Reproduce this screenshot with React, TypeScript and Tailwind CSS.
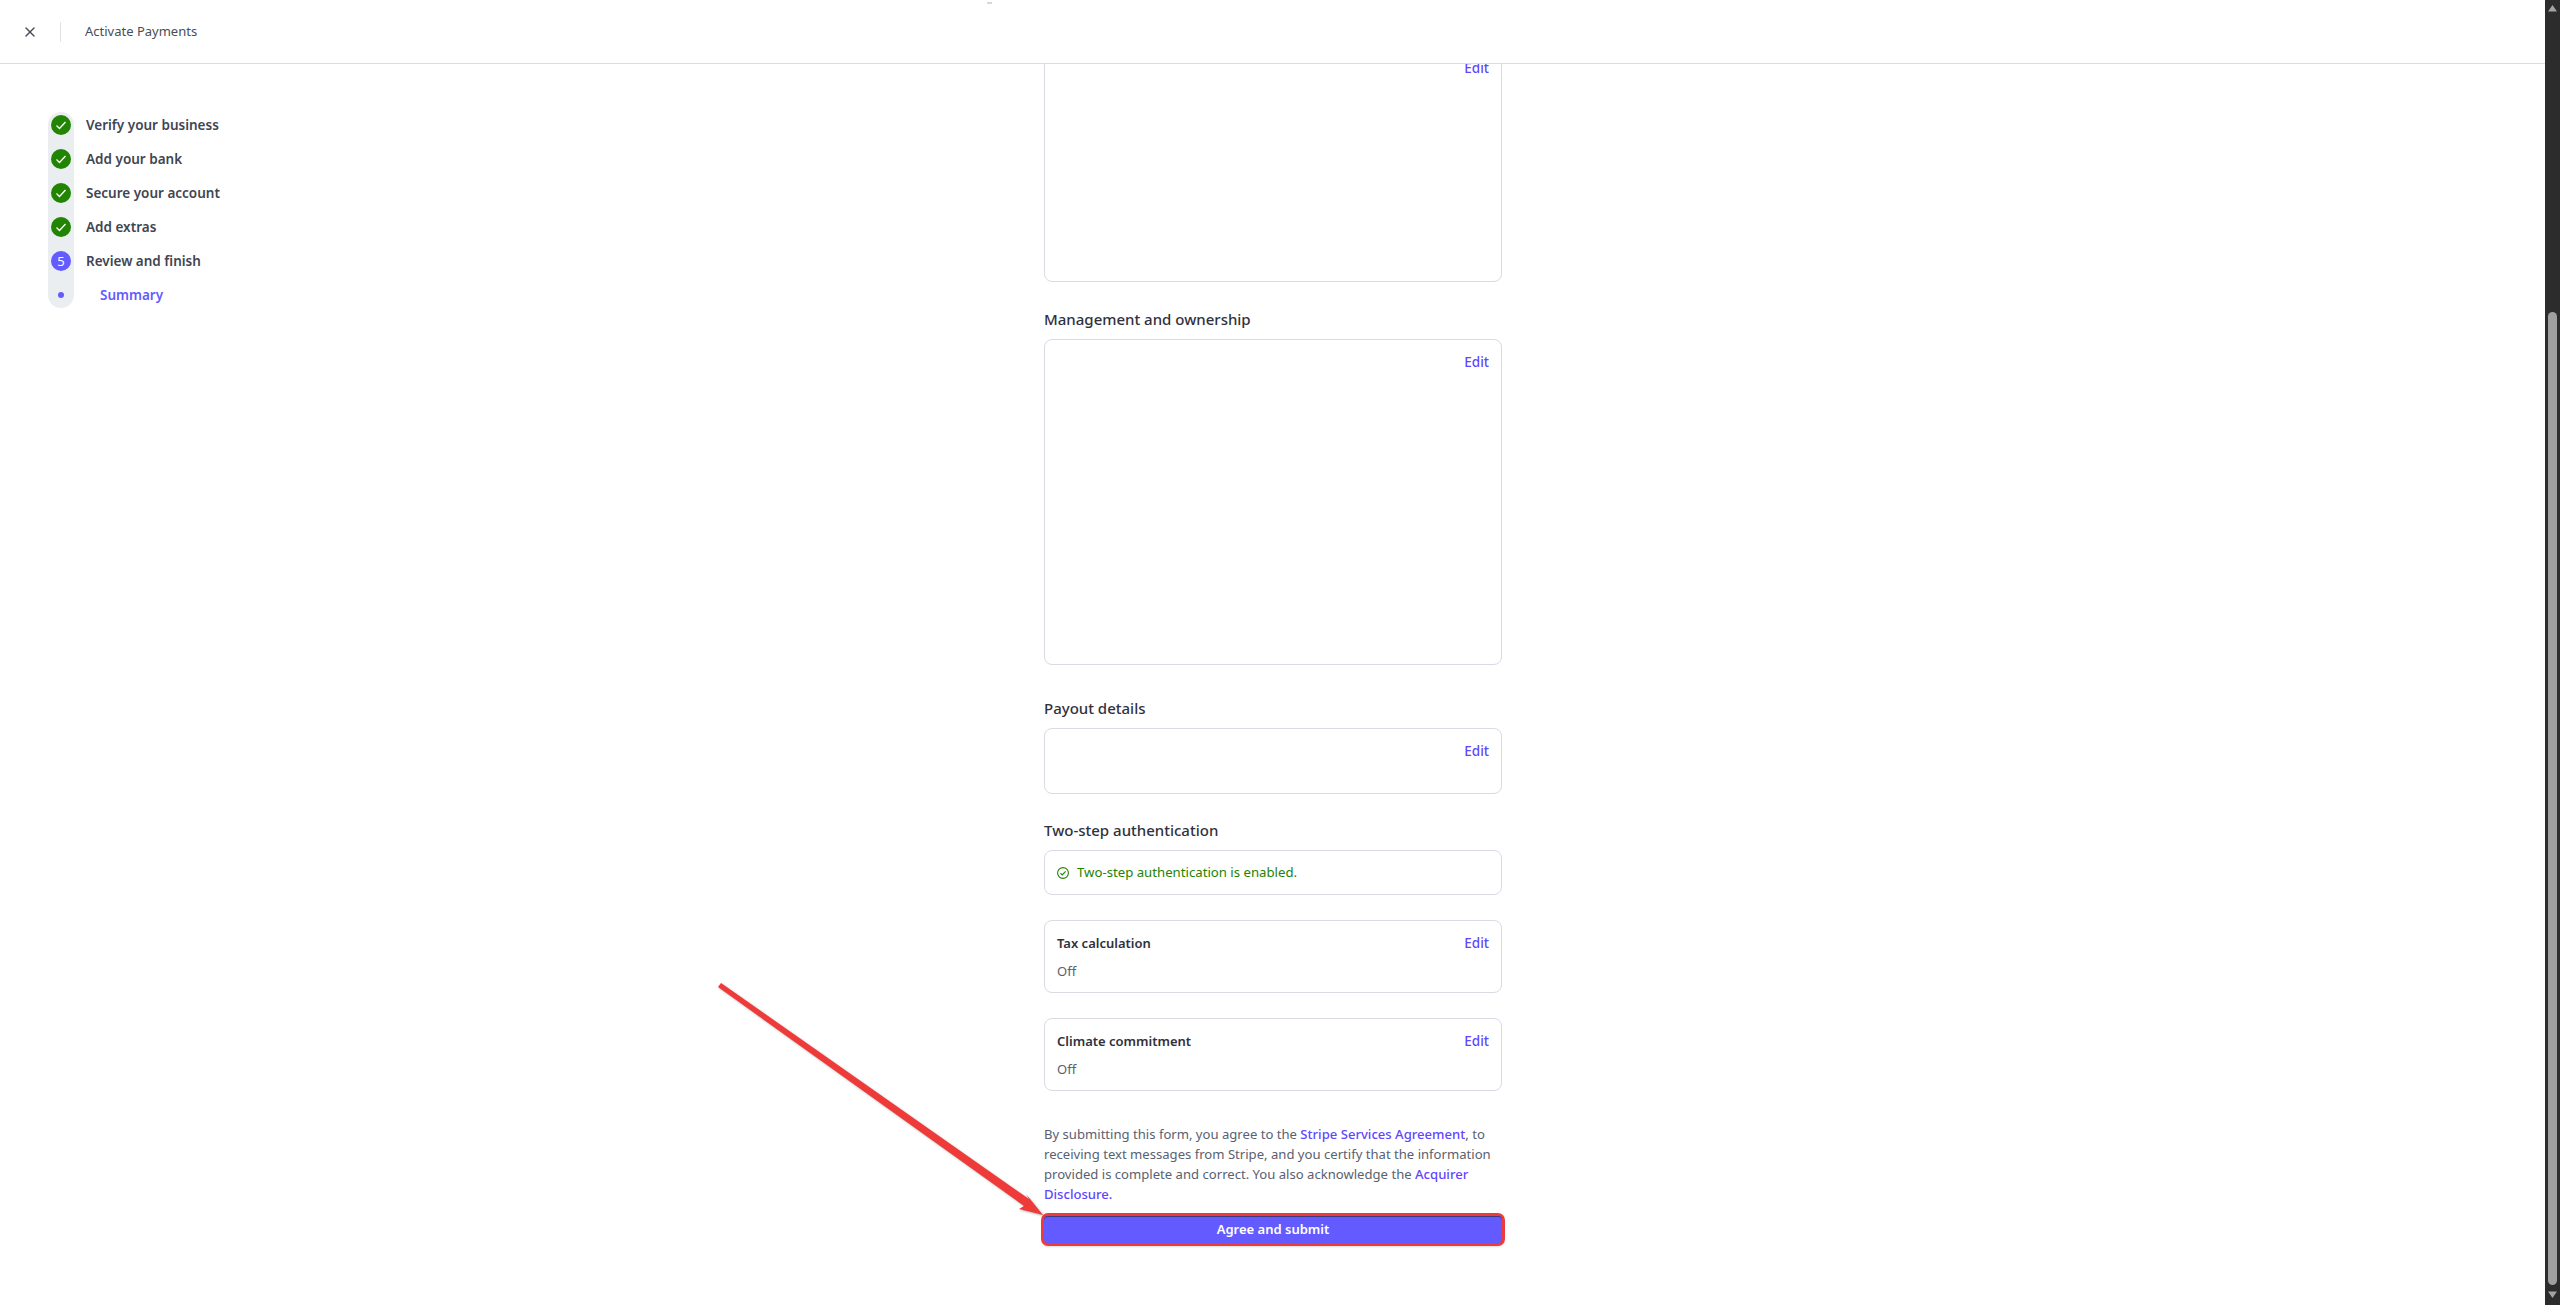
import { X } from 'lucide-react';

const font = "font-['Noto_Sans','Liberation_Sans',sans-serif]";

const steps = ['Verify your business', 'Add your bank', 'Secure your account', 'Add extras'];

function EditLink() {
  return <a className="text-[13.5px] leading-5 font-medium text-[#5f46ff]">Edit</a>;
}

function StepCheck() {
  return (
    <span className="flex h-5 w-5 items-center justify-center rounded-full bg-[#228403]">
      <svg width="12" height="12" viewBox="0 0 12 12" fill="none">
        <path d="M1.5 6.5 4.5 9.5 10.5 3" stroke="white" strokeWidth="1.3" />
      </svg>
    </span>
  );
}

function Sidebar() {
  return (
    <aside className="w-[1044px] flex-none pt-[48px] pl-12">
      <div className="flex">
        <div className="flex w-[26px] flex-col items-center gap-[14px] rounded-full bg-[#ebeef1] py-[3px]">
          {steps.map((s) => (
            <StepCheck key={s} />
          ))}
          <span className="flex h-5 w-5 items-center justify-center rounded-full bg-[#635bff] text-[13px] leading-none text-white">
            5
          </span>
          <span className="flex h-5 w-5 items-center justify-center">
            <span className="h-[6px] w-[6px] rounded-full bg-[#635bff]" />
          </span>
        </div>
        <div className="ml-[12px] flex flex-col gap-[14px] py-[3px] text-[13.5px] font-semibold text-[#414552]">
          {steps.map((s) => (
            <div key={s} className="leading-5">
              {s}
            </div>
          ))}
          <div className="leading-5">Review and finish</div>
          <div className="pl-[14px] leading-5 text-[#635bff]">Summary</div>
        </div>
      </div>
    </aside>
  );
}

function SummaryCard({ title }: { title: string }) {
  return (
    <div className="mt-[25px] rounded-lg border border-[#d8dbe3] px-3 pt-3 pb-[11px]">
      <div className="flex items-center justify-between">
        <span className="text-[13px] leading-5 font-semibold text-[#30313d]">{title}</span>
        <EditLink />
      </div>
      <div className="mt-2 text-[13px] leading-5 text-[#596171]">Off</div>
    </div>
  );
}

function Scrollbar() {
  return (
    <div className="absolute top-0 right-0 bottom-0 flex w-[15px] flex-col items-center bg-[#2c2c2c]">
      <svg className="mt-[5px] flex-none" width="9" height="7" viewBox="0 0 9 7">
        <path d="M4.5 0 9 6.5H0Z" fill="#a3a3a3" />
      </svg>
      <div className="mt-[300px] h-[973px] w-[9px] flex-none rounded-full bg-[#9f9f9f]" />
      <svg className="mt-[6px] flex-none" width="9" height="7" viewBox="0 0 9 7">
        <path d="M4.5 7 9 .5H0Z" fill="#a3a3a3" />
      </svg>
    </div>
  );
}

export default function App() {
  return (
    <div className={`${font} relative flex h-[1305px] flex-col overflow-hidden bg-white pr-[15px]`}>
      <header className="relative z-10 flex h-[64px] flex-none items-center border-b border-[#dcdde4] bg-white">
        <X className="ml-[22px] h-4 w-4 text-[#474e5a]" strokeWidth={2} />
        <div className="ml-[22px] h-5 w-px bg-[#e0e2e8]" />
        <span className="ml-6 text-[13px] text-[#474e5a]">Activate Payments</span>
        <span className="absolute top-[2px] left-[987px] h-[2px] w-[5px] bg-[#d8d8d8]" />
      </header>

      <div className="flex min-h-0 flex-1">
        <Sidebar />
        <main className="-mt-[19px] w-[458px] flex-none">
          <div className="h-[237px] rounded-lg border border-[#d8dbe3] px-3 pt-[9px] text-right">
            <EditLink />
          </div>

          <h2 className="mt-[26px] text-[15px] leading-[22px] font-medium text-[#30313d]">
            Management and ownership
          </h2>
          <div className="mt-[9px] h-[326px] rounded-lg border border-[#d8dbe3] px-3 pt-[9px] text-right">
            <EditLink />
          </div>

          <h2 className="mt-[32px] text-[15px] leading-[22px] font-medium text-[#30313d]">Payout details</h2>
          <div className="mt-[9px] h-[66px] rounded-lg border border-[#d8dbe3] px-3 pt-[9px] text-right">
            <EditLink />
          </div>

          <h2 className="mt-[25px] text-[15px] leading-[22px] font-medium text-[#30313d]">
            Two-step authentication
          </h2>
          <div className="mt-[9px] flex h-[45px] items-center gap-2 rounded-lg border border-[#d8dbe3] px-3 text-[13.2px] text-[#228403]">
            <svg width="12" height="12" viewBox="0 0 12 12" fill="none">
              <circle cx="6" cy="6" r="5.4" stroke="#228403" strokeWidth="1.1" />
              <path d="M3.4 6.2 5.2 8 8.6 4.4" stroke="#228403" strokeWidth="1.1" />
            </svg>
            Two-step authentication is enabled.
          </div>

          <SummaryCard title="Tax calculation" />
          <SummaryCard title="Climate commitment" />

          <p className="mt-[33px] text-[13.1px] leading-5 text-[#596171]">
            By submitting this form, you agree to the{' '}
            <a className="font-medium text-[#5f46ff]">Stripe Services Agreement</a>, to receiving text messages from
            Stripe, and you certify that the information provided is complete and correct. You also acknowledge the{' '}
            <a className="font-medium text-[#5f46ff]">Acquirer Disclosure.</a>
          </p>

          <button className="mt-[12px] h-[27px] w-full rounded-[4px] bg-[#635bff] text-[13px] font-semibold text-white shadow-[inset_0_1px_0_#3d3a80,0_0_0_3px_#ef3a3a,0_2px_2px_2px_rgba(0,0,0,0.15)]">
            Agree and submit
          </button>
        </main>
      </div>

      {/* annotation arrow */}
      <svg
        className="pointer-events-none absolute top-0 left-0 drop-shadow-[1px_1px_1px_rgba(0,0,0,0.3)]"
        width="2560"
        height="1305"
        viewBox="0 0 2560 1305"
      >
        <path d="M721 983 1029 1199 1026 1194 1043 1215 1019 1209 1024 1206 718 987Z" fill="#ef3a3a" />
      </svg>

      <Scrollbar />
    </div>
  );
}
